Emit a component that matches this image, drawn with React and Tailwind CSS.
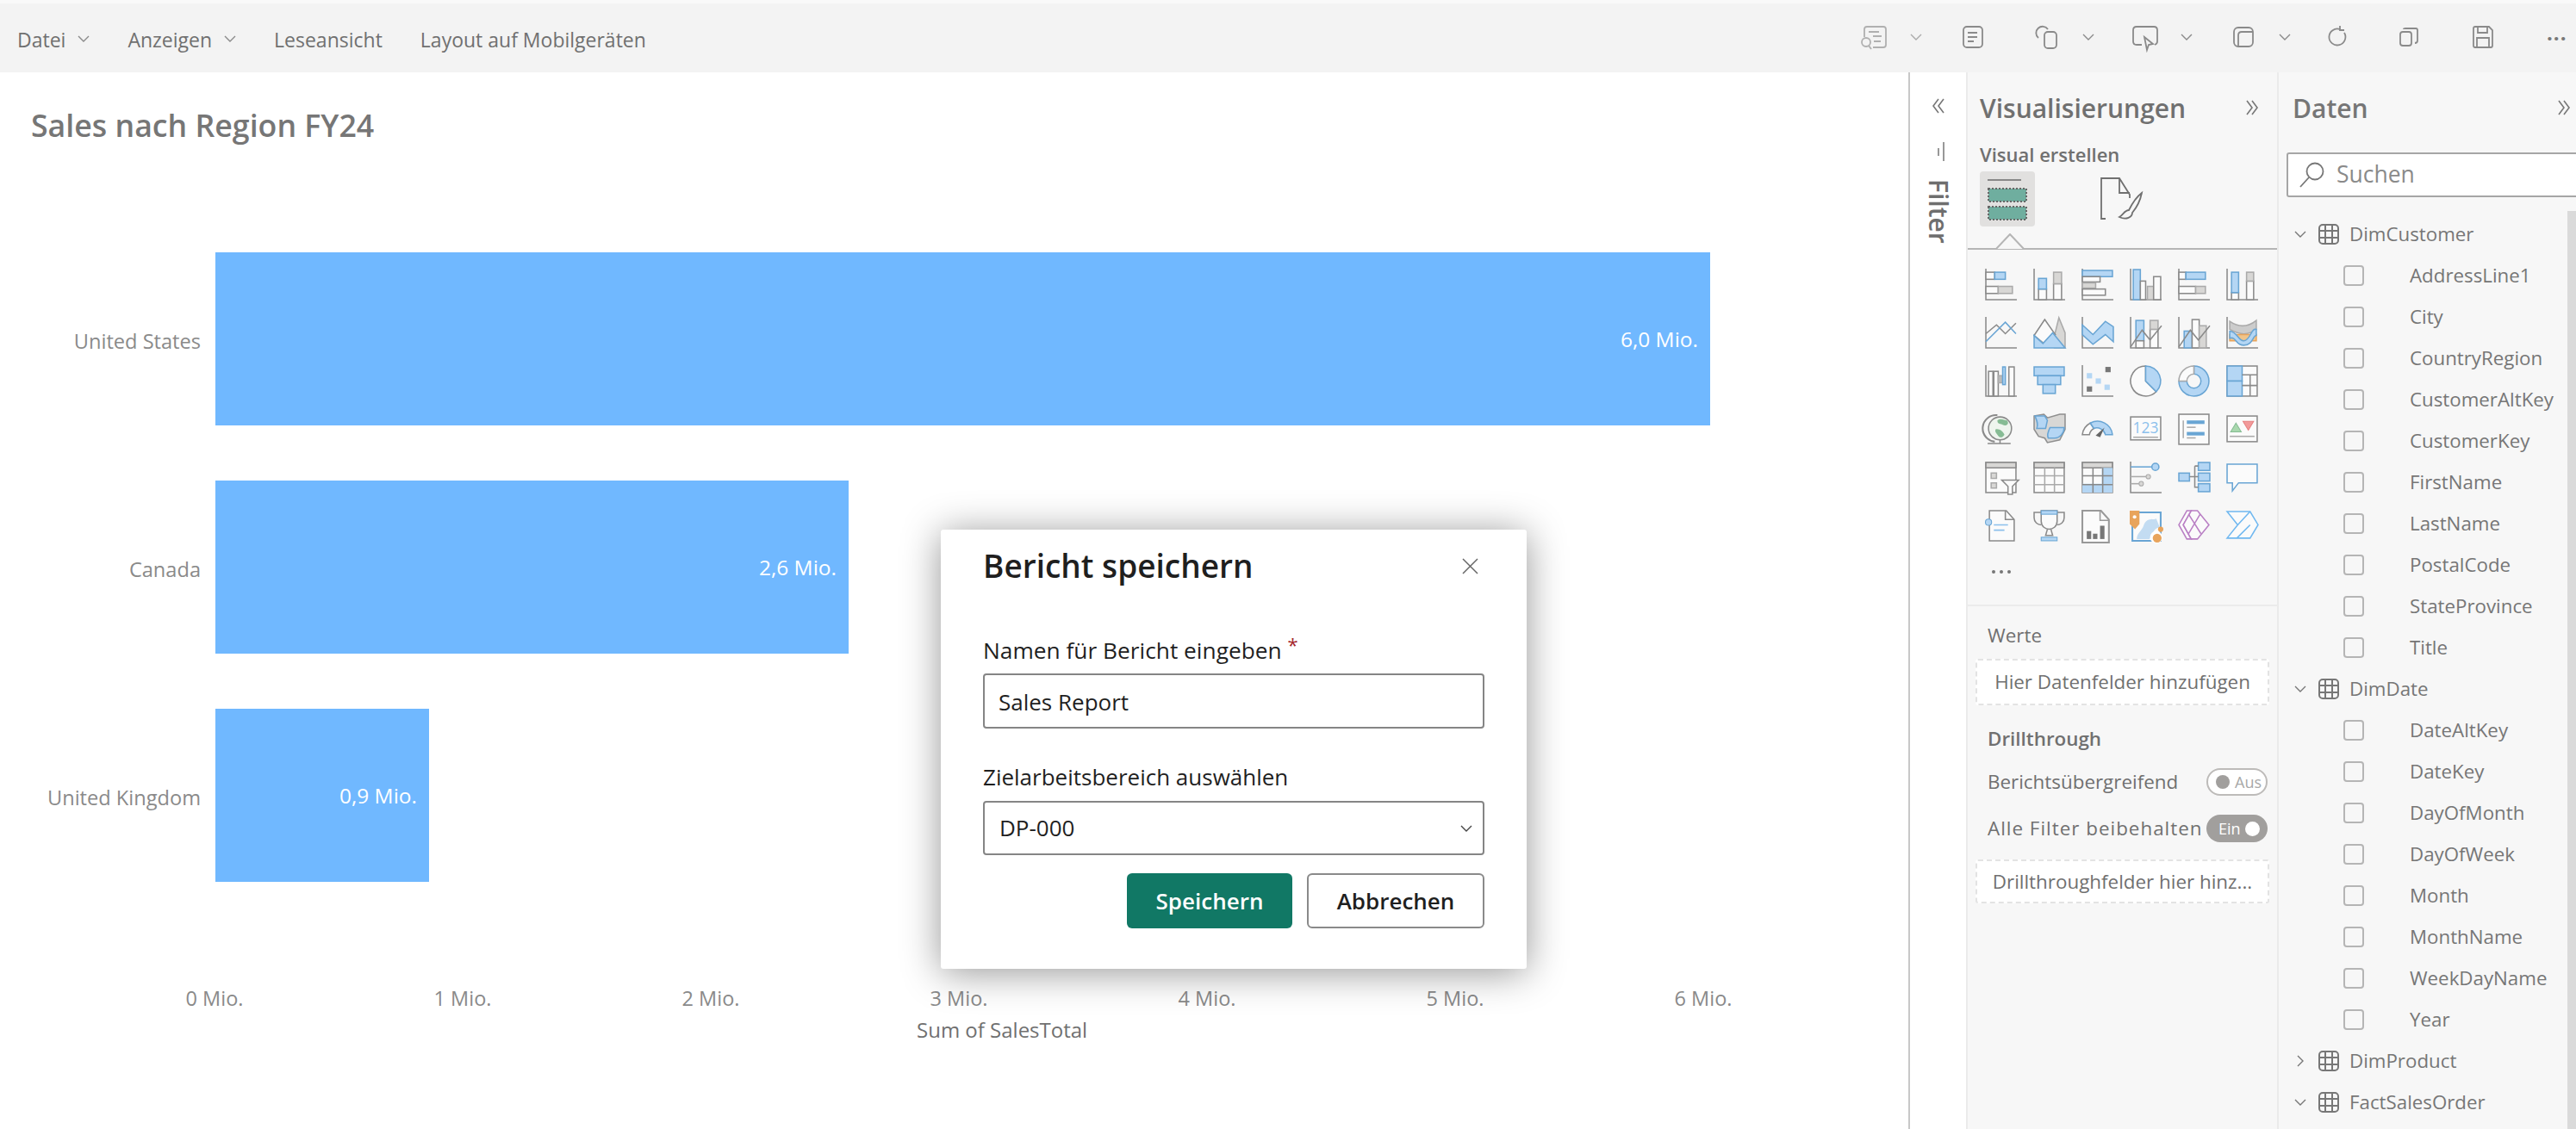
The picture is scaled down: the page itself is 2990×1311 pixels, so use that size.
const G = '#8a8a8a';
const B = '#69a5d4';
const L = '#b4d6f4';
const D = '#d8d7d5';
const W = '#fbfbfb';

// small rect helpers for the visual gallery
const wr = (x, y, w, h) => <rect x={x} y={y} width={w} height={h} fill={W} stroke={G} strokeWidth="1.5" />;
const br = (x, y, w, h) => <rect x={x} y={y} width={w} height={h} fill={L} stroke={B} strokeWidth="1.5" />;
const dr = (x, y, w, h) => <rect x={x} y={y} width={w} height={h} fill={D} stroke="#aaa" strokeWidth="1.5" />;
const ax = <path d="M1 0V35H36" fill="none" stroke={G} strokeWidth="1.5" />;
const line = (d, c = G, w = 1.5) => <path d={d} fill="none" stroke={c} strokeWidth={w} />;
const shape = (d, f, c = G, w = 1.5) => <path d={d} fill={f} stroke={c} strokeWidth={w} />;

const GALLERY = [
  <>{ax}{wr(1, 4, 10, 8)}{br(11, 4, 12, 8)}{wr(1, 20, 14, 8)}{dr(15, 20, 16, 8)}</>,
  <>{ax}{wr(6, 23, 9, 12)}{br(6, 11, 9, 12)}{wr(23, 17, 9, 18)}{dr(23, 4, 9, 13)}</>,
  <>{ax}{br(1, 2, 34, 7)}{wr(1, 9, 20, 6)}{dr(1, 16, 15, 6)}{wr(1, 23, 26, 7)}</>,
  <>{ax}{br(4, 1, 8, 34)}{wr(12, 14, 6, 21)}{dr(20, 20, 7, 15)}{wr(27, 9, 8, 26)}</>,
  <>{ax}{wr(1, 4, 8, 8)}{br(9, 4, 22, 8)}{wr(1, 20, 19, 8)}{dr(20, 20, 11, 8)}</>,
  <>{ax}{wr(6, 27, 8, 8)}{br(6, 4, 8, 23)}{wr(23, 14, 8, 21)}{dr(23, 4, 8, 10)}</>,
  <>{ax}{line('M1 19L13 9L23 19L35 7')}{line('M1 28L23 6L35 19', B)}</>,
  <>{shape('M1 21L13 3L24 21L29 1L36 18V35H24Z', D, '#aaa')}{shape('M1 21L13 3L25 20L12 30Z', W)}{shape('M1 21L11 30L22 18L36 35H1Z', L, B)}</>,
  <>{line('M1 0V35H36')}{shape('M1 9L13 20L27 5L36 11V28L27 20L13 31L1 20Z', L, B)}</>,
  <>{ax}{br(7, 4, 9, 23)}{wr(7, 27, 9, 8)}{wr(23, 14, 9, 21)}{dr(23, 4, 9, 10)}{line('M1 34L14 15L23 26L36 10')}</>,
  <>{ax}{br(7, 16, 9, 19)}{wr(16, 3, 8, 32)}{dr(24, 10, 8, 25)}{line('M1 34L14 15L23 26L36 10')}</>,
  <>{ax}{shape('M4 5C14 12 24 12 34 4V14C24 22 14 20 4 14Z', '#ccc', '#aaa')}{shape('M4 20H34V27H4Z', '#f0c48a', '#e8a45c')}{shape('M4 16C12 16 14 28 20 27C28 26 28 12 34 14V21C30 21 30 32 20 32C10 32 12 22 4 24Z', L, B)}</>,
  <>{line('M1 0V35H36')}{wr(4, 7, 5, 28)}{wr(10, 7, 5, 28)}{shape('M15 12H20V20H15Z', '#bbb', '#aaa')}{br(20, 2, 3, 20)}{wr(27, 2, 6, 33)}</>,
  <>{br(1, 2, 34, 10)}{br(5, 12, 26, 10)}{br(11, 22, 14, 10)}</>,
  <>{ax}<rect x="6" y="9" width="6" height="6" fill={L} /><rect x="27" y="2" width="6" height="6" fill="#777" /><rect x="16" y="15" width="6" height="6" fill={L} /><rect x="26" y="22" width="6" height="6" fill={L} /><rect x="6" y="24" width="6" height="6" fill="#777" /></>,
  <>{shape('M18 1A17 17 0 1 0 30 30L18 18Z', W)}{shape('M18 1A17 17 0 0 1 30 30L18 18Z', L, B)}</>,
  <><path d="M18 1A17 17 0 1 1 1 18H10A8 8 0 1 0 18 10Z" fill={L} stroke={B} strokeWidth="1.5" /><path d="M18 1A17 17 0 0 0 1 18H10A8 8 0 0 1 18 10Z" fill={W} stroke="#aaa" strokeWidth="1.5" /></>,
  <>{wr(1, 1, 34, 34)}{br(1, 1, 17, 17)}{br(1, 18, 17, 17)}{line('M18 11H35M27 11V35M18 23H35')}</>,
  <>{line('M14 2A15 15 0 0 0 11 32', G, 2)}<circle cx="17" cy="17" r="13" fill="#eef5ee" stroke={G} strokeWidth="1.5" /><path d="M14 8C18 5 22 8 25 8C28 12 24 15 20 13C18 11 14 13 14 8ZM12 18C16 17 20 20 22 24C20 28 16 28 14 24C12 22 11 20 12 18Z" fill="#86bc94" /><path d="M3 34H29M17 30V34" stroke={G} strokeWidth="1.5" /></>,
  <>{shape('M1 3L12 1L16 5L30 1H36V18L30 30L16 33L13 28L6 26L1 18Z', D, '#8f8f8f')}{shape('M2 3H13L16 8L14 17H4C6 12 4 8 2 3Z', L, B)}{shape('M19 16H35C35 22 30 28 24 28H17C15 24 17 20 19 16Z', L, B)}</>,
  <>{shape('M1 24A17 17 0 0 1 10 11L14 17A10 10 0 0 0 9 24Z', W)}{shape('M10 11A17 17 0 0 1 35 24H27A10 10 0 0 0 14 17Z', L, B)}<path d="M16 25L26 16L21 27Z" fill="#666" /></>,
  <>{wr(1, 4, 34, 26)}<text x="18" y="22" textAnchor="middle" fontSize="17" fontFamily="'Open Sans', sans-serif" fill="#8cc0ec">123</text>{line('M4 27H32', '#aaa')}</>,
  <>{wr(1, 1, 34, 34)}{line('M6 8V28', '#aaa')}<rect x="10" y="8" width="20" height="4" fill={B} /><rect x="10" y="15" width="10" height="1.5" fill="#aaa" /><rect x="10" y="21" width="20" height="4" fill={B} /><rect x="10" y="27" width="10" height="1.5" fill="#aaa" /></>,
  <>{wr(1, 3, 34, 29)}<path d="M5 21L11 11L17 21Z" fill="#a9d8ae" stroke="#86bc94" /><path d="M19 9H31L25 19Z" fill="#f29a9a" stroke="#e58080" />{line('M4 26H32', '#aaa')}</>,
  <>{wr(1, 1, 34, 34)}{shape('M1 1H35V7H1Z', D)}{shape('M7 13H13V19H7ZM7 24H13V30H7Z', D, '#aaa')}{shape('M19 21H38L31 28V37H26V28Z', W)}</>,
  <>{wr(1, 1, 34, 34)}{shape('M1 1H35V7H1Z', D)}{line('M13 7V35M24 7V35M1 16H35M1 26H35', '#aaa')}</>,
  <>{wr(1, 1, 34, 34)}{shape('M1 1H35V7H1Z', D)}{shape('M23 7H35V35H1V25H23Z', L, 'none')}{line('M13 7V35M24 7V35M1 16H35M1 26H35', '#888')}</>,
  <>{ax}{line('M1 6H29', B)}<circle cx="29" cy="6" r="4" fill={L} stroke={B} strokeWidth="1.5" />{line('M1 17H20', '#aaa')}<circle cx="21" cy="17" r="2.5" fill={D} stroke="#aaa" />{line('M1 25H12', '#aaa')}<circle cx="13" cy="25" r="2.5" fill={D} stroke="#aaa" /></>,
  <>{br(1, 13, 12, 9)}{br(23, 1, 13, 9)}{br(23, 13, 13, 9)}{br(23, 25, 13, 9)}{line('M13 17H23M19 5H23M19 5V29H23', G)}</>,
  <>{shape('M1 3H35V24H14L7 33V24H1Z', W, B)}</>,
  <>{shape('M5 1H24L33 11V35H5Z', W)}{line('M23 1V11H33')}<circle cx="4" cy="14" r="3.5" fill={L} stroke={B} />{line('M10 17H26M10 23H22', '#8cc0ec')}</>,
  <>{shape('M9 1H27V13C27 19 22 22 18 22C14 22 9 19 9 13Z', W)}{line('M9 3H1V9C1 14 5 17 9 17M27 3H35V9C35 14 31 17 27 17')}<rect x="9" y="1" width="18" height="4" fill={L} stroke={B} />{line('M16 22L14 29H22L20 22')}<rect x="9" y="31" width="18" height="4" fill={L} stroke={B} /></>,
  <>{shape('M1 1H22L31 11V37H1Z', W, '#999', 2)}{line('M21 1V12H31', '#999')}<rect x="6" y="24" width="5" height="9" fill="#777" /><rect x="13" y="27" width="5" height="6" fill="#777" /><rect x="21" y="18" width="5" height="15" fill="#777" /></>,
  <>{shape('M3 3H35V35H3Z', W, B, 2)}{shape('M16 17C20 8 26 12 30 10L34 20C26 20 26 30 22 33H8C8 26 14 24 16 17Z', '#c3dcf2', 'none')}<path d="M0 1H11V16L6 22L0 16Z" fill="#e8a45c" /><circle cx="5.5" cy="8" r="2" fill="#fff" /><circle cx="30" cy="31" r="7" fill="#fff" /><circle cx="31" cy="32" r="5" fill="#e8a45c" /><circle cx="35" cy="22" r="3" fill="#e8a45c" /></>,
  <>{shape('M10 1L1 17L10 33L15 33L6 17L15 1Z', W, '#b97fc4')}{shape('M15 1H22L35 17L22 33H15L6 17Z', W, '#b97fc4')}{line('M12 5L26 27M25 5L12 27', '#b97fc4')}</>,
  <>{shape('M1 2H27L36 17L27 32H1L13 17Z', W, '#70b8f0')}{line('M13 17L27 2M12 32L27 17', '#70b8f0')}</>,
];

// toolbar icons, drawn on a 36x36 box at the sizes of the original
const TOOL = {
  comments: (
    <g fill="none" stroke="#b0b0b0" strokeWidth="1.8">
      <path d="M7 18V9Q7 6 10 6H29Q32 6 32 9V27Q32 30 29 30H17" />
      <path d="M12 12H24M17 17H27M18 23H26" />
      <circle cx="9" cy="24" r="5" />
      <path d="M12 28L15 32" />
    </g>
  ),
  notes: (
    <g fill="none" stroke={G} strokeWidth="1.8">
      <rect x="7" y="6" width="22" height="24" rx="4" />
      <path d="M12 13H23M12 18H23M12 23H19" />
    </g>
  ),
  shapes: (
    <g fill="none" stroke={G} strokeWidth="1.8">
      <path d="M8 19A7.5 7.5 0 1 1 19 9" />
      <rect x="15" y="12" width="14" height="19" rx="4" />
    </g>
  ),
  present: (
    <g fill="none" stroke={G} strokeWidth="1.8">
      <path d="M14 27H8Q4 27 4 23V10Q4 6 8 6H28Q32 6 32 10V23Q32 26 29 27" />
      <path d="M17 18L27 26L22 27L20 33Z" />
    </g>
  ),
  layers: (
    <g fill="none" stroke={G} strokeWidth="1.8">
      <rect x="7" y="7" width="22" height="22" rx="5" />
      <path d="M12 29V16Q12 12 16 12H29" />
    </g>
  ),
  refresh: (
    <g fill="none" stroke={G} strokeWidth="1.8">
      <path d="M20 9A9.5 9.5 0 1 0 25 13" />
      <path d="M20 5V10H25" />
    </g>
  ),
  copy: (
    <g fill="none" stroke={G} strokeWidth="1.8">
      <rect x="8" y="12" width="13" height="16" rx="3" />
      <path d="M12 9Q12 8 14 8H26Q28 8 28 10V22Q28 25 25 25" />
    </g>
  ),
  save: (
    <g fill="none" stroke={G} strokeWidth="1.8">
      <path d="M9 6H25L29 10V28Q29 30 27 30H9Q7 30 7 28V8Q7 6 9 6Z" />
      <path d="M12 6V13H23V6M11 30V19H25V30" />
    </g>
  ),
};

const REGIONS = [
  { name: 'United States', value: '6,0 Mio.', width: 'w-[1735px]' },
  { name: 'Canada', value: '2,6 Mio.', width: 'w-[735px]' },
  { name: 'United Kingdom', value: '0,9 Mio.', width: 'w-[248px]' },
];

const TICKS = ['0 Mio.', '1 Mio.', '2 Mio.', '3 Mio.', '4 Mio.', '5 Mio.', '6 Mio.'];

const FIELDS = [
  { table: 'DimCustomer', open: true, items: ['AddressLine1', 'City', 'CountryRegion', 'CustomerAltKey', 'CustomerKey', 'FirstName', 'LastName', 'PostalCode', 'StateProvince', 'Title'] },
  { table: 'DimDate', open: true, items: ['DateAltKey', 'DateKey', 'DayOfMonth', 'DayOfWeek', 'Month', 'MonthName', 'WeekDayName', 'Year'] },
  { table: 'DimProduct', open: false, items: [] },
  { table: 'FactSalesOrder', open: true, items: [] },
];

function Chevron({ className = '', dir = 'down', color = '#8a8a8a' }) {
  return (
    <svg className={className} width="14" height="14" viewBox="0 0 14 14" fill="none" stroke={color} strokeWidth="1.4">
      <path d={dir === 'down' ? 'M1 4L7 10L13 4' : 'M4 1L10 7L4 13'} />
    </svg>
  );
}

function DoubleChevron({ left = false }) {
  return (
    <svg width="16" height="18" viewBox="0 0 16 18" fill="none" stroke="#777" strokeWidth="1.6">
      <path d={left ? 'M8 1L2 9L8 17M14 1L8 9L14 17' : 'M2 1L8 9L2 17M8 1L14 9L8 17'} />
    </svg>
  );
}

function ToolIcon({ name }) {
  return (
    <svg width="36" height="36" viewBox="0 0 36 36">
      {TOOL[name]}
    </svg>
  );
}

function TableIcon() {
  return (
    <svg width="24" height="24" viewBox="0 0 24 24" fill="none" stroke="#777" strokeWidth="2" className="shrink-0">
      <rect x="1" y="1" width="22" height="22" rx="4" />
      <path d="M8 1V23M16 1V23M1 8H23M1 16H23" />
    </svg>
  );
}

function Toolbar() {
  return (
    <header className="relative flex h-[80px] items-center justify-between bg-[#f3f3f3] text-[23px] text-[#707070]">
      <nav className="flex items-center pl-[20px] pt-[4px]">
        <span>Datei</span>
        <Chevron className="ml-[14px] mb-[3px]" />
        <span className="ml-[44px]">Anzeigen</span>
        <Chevron className="ml-[14px] mb-[3px]" />
        <span className="ml-[44px]">Leseansicht</span>
        <span className="ml-[44px]">Layout auf Mobilgeräten</span>
      </nav>
      <div className="flex items-center pr-[10px] pb-[2px]">
        <ToolIcon name="comments" />
        <Chevron className="ml-[24px] mr-[41px]" color="#aaa" />
        <ToolIcon name="notes" />
        <div className="w-[50px]" />
        <ToolIcon name="shapes" />
        <Chevron className="ml-[23px] mr-[41px]" />
        <ToolIcon name="present" />
        <Chevron className="ml-[23px] mr-[41px]" />
        <ToolIcon name="layers" />
        <Chevron className="ml-[23px] mr-[37px]" />
        <ToolIcon name="refresh" />
        <div className="w-[46px]" />
        <ToolIcon name="copy" />
        <div className="w-[50px]" />
        <ToolIcon name="save" />
        <span className="ml-[56px] mb-[10px] w-[24px] text-[24px] font-bold leading-none tracking-[1px] text-[#777]">...</span>
      </div>
    </header>
  );
}

function Canvas() {
  return (
    <main className="w-[2215px] shrink-0 bg-white">
      <h1 className="pl-[36px] pt-[36px] text-[35.7px] font-semibold leading-[50px] text-[#767676]">Sales nach Region FY24</h1>
      <div className="mt-[123px] flex flex-col gap-[64px]">
        {REGIONS.map((region) => (
          <div key={region.name} className="flex h-[201px] items-center">
            <span className="w-[233px] shrink-0 pt-[7px] text-right text-[23.6px] text-[#8a8a8a]">{region.name}</span>
            <div className={`${region.width} ml-[17px] flex h-full items-center justify-end bg-[#70b8ff] pt-[2px] pr-[14px] text-[24.5px] text-white`}>
              {region.value}
            </div>
          </div>
        ))}
      </div>
      <div className="ml-[105px] mt-[120px] grid grid-cols-[repeat(7,288px)] text-center text-[23.5px] leading-[30px] text-[#8a8a8a]">
        {TICKS.map((tick) => (
          <span key={tick}>{tick}</span>
        ))}
      </div>
      <p className="mt-[7px] pl-[1064px] text-[24px] leading-[30px] text-[#707070]">Sum of SalesTotal</p>
    </main>
  );
}

function FilterPane() {
  return (
    <aside className="flex w-[67px] shrink-0 flex-col items-center border-l-2 border-[#c8c8c8] bg-white pt-[30px]">
      <DoubleChevron left />
      <svg className="ml-[6px] mt-[32px]" width="14" height="24" viewBox="0 0 14 24" fill="none" stroke="#777" strokeWidth="1.5">
        <path d="M4 8V17M10 1V23" />
      </svg>
      <span className="mt-[20px] text-[30px] font-semibold leading-none text-[#6e6e6e] [writing-mode:vertical-rl]">Filter</span>
    </aside>
  );
}

function Toggle({ on }) {
  if (on) {
    return (
      <span className="flex h-[32px] w-[71px] items-center justify-between rounded-full bg-[#a19f9d] pl-[14px] pr-[9px] text-[18px] tracking-normal text-white">
        Ein
        <span className="h-[17px] w-[17px] rounded-full bg-white" />
      </span>
    );
  }
  return (
    <span className="flex h-[32px] w-[71px] items-center gap-[6px] rounded-full border-2 border-[#bdbbb9] bg-white pl-[9px] text-[18px] text-[#a8a8a8]">
      <span className="h-[16px] w-[16px] rounded-full bg-[#a19f9d]" />
      Aus
    </span>
  );
}

function VisualizationsPane() {
  return (
    <aside className="flex w-[361px] shrink-0 flex-col border-l-2 border-[#ebebeb] bg-[#f7f7f7] text-[#707070]">
      <div className="flex h-[82px] items-center justify-between pl-[14px] pr-[21px]">
        <h2 className="text-[30px] font-semibold">Visualisierungen</h2>
        <DoubleChevron />
      </div>
      <p className="pl-[14px] text-[22px] font-semibold leading-[26px]">Visual erstellen</p>
      <div className="mt-[7px] flex items-center gap-[76px] pl-[14px]">
        <div className="flex h-[64px] w-[64px] items-center justify-center rounded-[4px] bg-[#e1e0df]">
          <svg width="48" height="52" viewBox="0 0 48 52">
            <path d="M1 4H40" stroke="#888" strokeWidth="2" />
            <rect x="2" y="14" width="44" height="15" fill="#6fae9f" stroke="#666" strokeWidth="2" strokeDasharray="2 2" />
            <rect x="2" y="35" width="44" height="15" fill="#6fae9f" stroke="#666" strokeWidth="2" strokeDasharray="2 2" />
          </svg>
        </div>
        <svg width="50" height="50" viewBox="0 0 50 50" fill="none" stroke="#707070" strokeWidth="1.8">
          <path d="M6 48H1V1H22L34 20V24" />
          <path d="M22 1V18H34" />
          <path d="M48 18C40 24 36 32 33 38C28 38 26 44 22 46C30 50 37 46 37 41C42 35 46 28 48 18Z" />
        </svg>
      </div>
      <div className="relative mt-[25px] h-[2px] bg-[#b5b5b5]">
        <svg className="absolute left-[32px] top-[-17px]" width="34" height="18" viewBox="0 0 34 18" fill="#f7f7f7" stroke="#b5b5b5" strokeWidth="2">
          <path d="M1 18L17 1L33 18" />
        </svg>
      </div>
      <div className="ml-[20px] mt-[22px] grid grid-cols-[repeat(6,56px)] gap-y-[18px]">
        {GALLERY.map((icon, index) => (
          <svg key={index} width="38" height="38" viewBox="0 0 37 37" className="overflow-visible">
            {icon}
          </svg>
        ))}
      </div>
      <div className="ml-[28px] mt-[21px] flex h-[26px] items-center gap-[5px]">
        <span className="h-[4px] w-[4px] rounded-full bg-[#777]" />
        <span className="h-[4px] w-[4px] rounded-full bg-[#777]" />
        <span className="h-[4px] w-[4px] rounded-full bg-[#777]" />
      </div>
      <div className="mt-[25px] h-[2px] bg-[#ebebeb]" />
      <div className="px-[9px] pt-[20px] text-[22.4px]">
        <p className="pl-[14px] leading-[28px]">Werte</p>
        <div className="mt-[13px] flex h-[54px] items-center justify-center rounded-[3px] border-2 border-dashed border-[#e3e3e3] bg-white">
          Hier Datenfelder hinzufügen
        </div>
        <p className="mt-[25px] pl-[14px] font-semibold leading-[28px]">Drillthrough</p>
        <div className="mt-[19px] flex h-[34px] items-center justify-between pl-[14px] pr-[2px]">
          <span>Berichtsübergreifend</span>
          <Toggle />
        </div>
        <div className="mt-[20px] flex h-[34px] items-center justify-between pl-[14px] pr-[2px]">
          <span className="tracking-[1px]">Alle Filter beibehalten</span>
          <Toggle on />
        </div>
        <div className="mt-[19px] flex h-[51px] items-center justify-center whitespace-nowrap rounded-[3px] border-2 border-dashed border-[#e3e3e3] bg-white">
          Drillthroughfelder hier hinz...
        </div>
      </div>
    </aside>
  );
}

function DataPane() {
  return (
    <aside className="relative min-w-0 flex-1 overflow-hidden border-l-2 border-[#ebebeb] bg-[#f7f7f7] text-[#767676]">
      <div className="flex h-[82px] items-center justify-between pl-[16px] pr-[6px]">
        <h2 className="text-[30px] font-semibold">Daten</h2>
        <DoubleChevron />
      </div>
      <div className="ml-[9px] mt-[11px] flex h-[52px] w-[400px] items-center rounded-[3px] border-2 border-[#a6a6a6] bg-white pl-[13px]">
        <svg width="30" height="30" viewBox="0 0 30 30" fill="none" stroke="#777" strokeWidth="1.8">
          <circle cx="18" cy="11" r="9.5" />
          <path d="M11 18L1 29" />
        </svg>
        <span className="ml-[13px] text-[26.5px] text-[#8a8a8a]">Suchen</span>
      </div>
      <div className="absolute bottom-0 right-0 top-[161px] w-[10px] bg-[#dadada]" />
      <div className="mt-[19px] text-[22.3px]">
        {FIELDS.map((field) => (
          <div key={field.table}>
            <div className="flex h-[48px] items-center pl-[17px]">
              <span className="flex w-[16px] justify-center">
                <Chevron dir={field.open ? 'down' : 'right'} color="#777" />
              </span>
              <span className="ml-[13px]"><TableIcon /></span>
              <span className="ml-[12px]">{field.table}</span>
            </div>
            {field.items.map((item) => (
              <div key={item} className="flex h-[48px] items-center pl-[75px]">
                <span className="h-[24px] w-[24px] shrink-0 rounded-[4px] border-2 border-[#b5b5b5]" />
                <span className="ml-[53px]">{item}</span>
              </div>
            ))}
          </div>
        ))}
      </div>
    </aside>
  );
}

function SaveDialog() {
  return (
    <div className="absolute left-[1092px] top-[615px] h-[510px] w-[680px] rounded-[3px] bg-white px-[49px] pt-[14px] shadow-[0_4px_45px_rgba(0,0,0,0.42)] text-[#1f1f1f]">
      <div className="flex h-[56px] items-center justify-between pr-[7px]">
        <h3 className="text-[37px] font-semibold">Bericht speichern</h3>
        <svg width="19" height="19" viewBox="0 0 19 19" stroke="#666" strokeWidth="1.5">
          <path d="M1 1L18 18M18 1L1 18" />
        </svg>
      </div>
      <label className="mt-[52px] block text-[26.3px] leading-[36px]">
        Namen für Bericht eingeben <span className="relative top-[-8px] text-[22px] text-[#a4262c]">*</span>
      </label>
      <div className="mt-[8px] flex h-[64px] items-center rounded-[4px] border-2 border-[#858585] pl-[16px] pt-[2px] text-[26px]">Sales Report</div>
      <label className="mt-[38px] block text-[26px] leading-[36px]">Zielarbeitsbereich auswählen</label>
      <div className="mt-[10px] flex h-[63px] items-center justify-between rounded-[4px] border-2 border-[#858585] pl-[17px] pr-[12px] text-[26px]">
        DP-000
        <Chevron color="#444" />
      </div>
      <div className="mt-[21px] flex justify-end gap-[17px]">
        <button type="button" className="h-[64px] w-[192px] rounded-[6px] bg-[#117865] text-[26px] font-semibold text-white">Speichern</button>
        <button type="button" className="h-[64px] w-[206px] rounded-[6px] border-2 border-[#8a8a8a] bg-white text-[26px] font-semibold">Abbrechen</button>
      </div>
    </div>
  );
}

export default function App() {
  return (
    <div className="relative flex h-[1311px] w-[2990px] flex-col overflow-hidden bg-white font-['Open_Sans',sans-serif]">
      <div className="h-[4px] bg-[#f9f9f9]" />
      <Toolbar />
      <div className="flex min-h-0 flex-1">
        <Canvas />
        <FilterPane />
        <VisualizationsPane />
        <DataPane />
      </div>
      <SaveDialog />
    </div>
  );
}
